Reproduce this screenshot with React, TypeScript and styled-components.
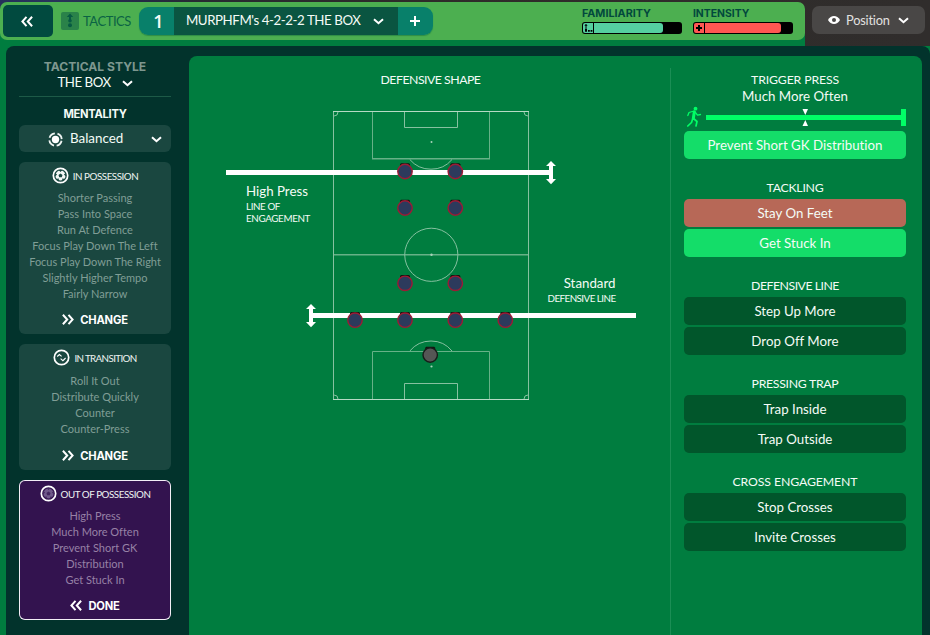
import React from "react";
import styled, { createGlobalStyle } from "styled-components";

const Global = createGlobalStyle`
  * { box-sizing: border-box; }
  body { margin: 0; background: #007d3f; overflow: hidden; }
`;

const Screen = styled.div`
  width: 930px;
  height: 635px;
  display: flex;
  flex-direction: column;
  overflow: hidden;
  background: #007d3f;
  color: #f4fbf6;
  font-family: Lato, sans-serif;
  font-variant-ligatures: none;
`;

const Text = styled.span<{ $size?: number; $ls?: number; $color?: string }>`
  display: block;
  white-space: nowrap;
  font-size: ${(p) => p.$size ?? 13.3}px;
  letter-spacing: ${(p) => p.$ls ?? 0}px;
  color: ${(p) => p.$color ?? "inherit"};
`;

const Strong = styled(Text)`
  font-family: Inter, sans-serif;
  font-weight: 700;
`;

/* ---------- header ---------- */

const Header = styled.header`
  display: flex;
  height: 46px;
  flex: none;
  background: linear-gradient(90deg, #25305a 0, #28335a 50px, #232a44 140px, #272b31 200px, #2e2b29 420px, #302d2c 100%);
`;

const HeaderMain = styled.div`
  width: 805px;
  height: 46px;
  padding-top: 2px;
  background: linear-gradient(transparent 20px, #007d3f 20px);
`;

const Bar = styled.div`
  height: 38px;
  display: flex;
  align-items: center;
  padding-left: 3px;
  border-radius: 7px;
  background: #4caf50;
`;

const BackButton = styled.button`
  width: 50px;
  height: 32px;
  padding: 0 2px 0 0;
  display: flex;
  align-items: center;
  justify-content: center;
  border: 0;
  border-radius: 5px;
  background: #014a3f;
`;

const TacticsBadge = styled.div`
  width: 18px;
  height: 18px;
  margin: 0 4px 0 8px;
  display: flex;
  border-radius: 2px;
  background: #2a8249;
`;

const TacticTabs = styled.div`
  display: flex;
  height: 28px;
  margin-left: 8px;
  border-radius: 9px;
  overflow: hidden;
  box-shadow: 0 1px 1px #2f8d45;
`;

const TabEnd = styled.div`
  width: 35px;
  display: flex;
  align-items: center;
  justify-content: center;
  background: #08806a;
`;

const TabNumber = styled(Text)`
  font-family: "Open Sans", sans-serif;
  font-weight: 600;
  padding-left: 4px;
`;

const TabName = styled.div`
  width: 224px;
  display: flex;
  align-items: center;
  padding: 0 14px 2px 12px;
  justify-content: space-between;
  background: #0a5541;
  & > svg { margin-top: 3px; }
`;

const Meter = styled.div<{ $gap: number }>`
  width: 100px;
  height: 26px;
  margin-left: ${(p) => p.$gap}px;
  display: flex;
  flex-direction: column;
  justify-content: space-between;
  line-height: 12px;
`;

const MeterTrack = styled.div`
  height: 12px;
  display: flex;
  padding: 1px;
  border-radius: 3px;
  background: #000;
`;

const MeterIcon = styled.div<{ $color: string }>`
  width: 10px;
  height: 10px;
  margin-right: 1px;
  display: flex;
  border-radius: 2px 0 0 2px;
  background: ${(p) => p.$color};
`;

const MeterFill = styled.div<{ $color: string; $width: number }>`
  width: ${(p) => p.$width}px;
  border-radius: 0 3px 3px 0;
  background: ${(p) => p.$color};
`;

const PositionButton = styled.button`
  width: 113px;
  height: 28px;
  margin: 6px 0 0 7px;
  padding: 0 16px;
  display: flex;
  align-items: center;
  border: 0;
  border-radius: 7px;
  background: #494746;
  color: #e2e1e0;
  font-family: Lato, sans-serif;
  & > span { margin: 0 auto 0 6px; }
`;

/* ---------- body ---------- */

const BodyWrap = styled.div`
  flex: 1;
  display: flex;
  padding-left: 6px;
`;

const Body = styled.div`
  width: 924px;
  display: flex;
  border-radius: 8px 8px 0 0;
  background: #02332c;
`;

const Sidebar = styled.aside`
  width: 183px;
  padding: 0 18px 0 13px;
  display: flex;
  flex-direction: column;
`;

const StyleBlock = styled.div`
  height: 51px;
  padding-top: 13px;
  display: flex;
  flex-direction: column;
  align-items: center;
  border-bottom: 1px solid #1d5a47;
  line-height: 16px;
`;

const StyleValue = styled.div`
  display: flex;
  align-items: center;
  gap: 11px;
  margin-top: -1px;
  & > svg { margin-top: 3px; }
`;

const MentalityTitle = styled.div`
  height: 28px;
  padding-top: 9px;
  display: flex;
  justify-content: center;
  line-height: 16px;
`;

const Select = styled.div`
  height: 27px;
  padding: 1px 9px 0 29px;
  display: flex;
  flex: none;
  align-items: center;
  border-radius: 6px;
  background: #1a4740;
  & > span { margin: -3px auto 0 7px; }
`;

const Card = styled.section<{ $height: number; $active?: boolean }>`
  height: ${(p) => p.$height}px;
  margin-top: 10px;
  flex: none;
  display: flex;
  flex-direction: column;
  justify-content: space-between;
  border-radius: 6px;
  background: ${(p) => (p.$active ? "#33134f" : "#1a4740")};
  color: ${(p) => (p.$active ? "#9781a6" : "#809e96")};
  box-shadow: ${(p) => (p.$active ? "inset 0 0 0 1px #f3eef6" : "none")};
`;

const CardHeader = styled.div<{ $height: number }>`
  height: ${(p) => p.$height}px;
  padding-bottom: ${(p) => p.$height - 27}px;
  display: flex;
  align-items: center;
  justify-content: center;
  gap: 4px;
  flex: none;
`;

const CardList = styled.div`
  flex: 1;
  display: flex;
  flex-direction: column;
  align-items: center;
  line-height: 16px;
`;

const CardAction = styled.div`
  height: 29px;
  display: flex;
  align-items: center;
  justify-content: center;
  gap: 6px;
  color: #fff;
`;

const Panel = styled.main`
  width: 733px;
  margin-top: 10px;
  display: flex;
  border-radius: 8px 8px 0 0;
  background: #007d3f;
`;

const Shape = styled.section`
  width: 481px;
  display: flex;
  flex-direction: column;
  align-items: center;
`;

const ShapeTitle = styled(Text)`
  height: 28px;
  margin-top: 12px;
  padding-left: 2px;
  line-height: 23px;
`;

const PitchArea = styled.div`
  position: relative;
  width: 481px;
  height: 320px;
  & > svg { display: block; }
`;

const LineLabel = styled.div<{ $x: number; $y: number; $right?: boolean }>`
  position: absolute;
  top: ${(p) => p.$y}px;
  ${(p) => (p.$right ? "right" : "left")}: ${(p) => p.$x}px;
  display: flex;
  flex-direction: column;
  align-items: ${(p) => (p.$right ? "flex-end" : "flex-start")};
  line-height: 12px;
  & > span:first-child { line-height: 18px; }
`;

const Options = styled.section`
  width: 236px;
  margin-top: 12px;
  padding-left: 13px;
  border-left: 1px solid #1b8e55;
`;

const Group = styled.div`
  width: 222px;
  margin-bottom: 16px;
  display: flex;
  flex-direction: column;
  gap: 2px;
`;

const GroupTitle = styled(Text)`
  height: 22px;
  line-height: 26px;
  text-align: center;
`;

const Choice = styled.button<{ $bg?: string }>`
  height: 28px;
  padding: 0 0 1px;
  border: 0;
  border-radius: 5px;
  background: ${(p) => p.$bg ?? "#01562b"};
  color: #f4fbf6;
  display: flex;
  align-items: center;
  justify-content: center;
  font-family: Lato, sans-serif;
  font-variant-ligatures: none;
`;

const PressHead = styled.div`
  display: flex;
  flex-direction: column;
  align-items: center;
  line-height: 17px;
  height: 38px;
  padding-top: 3px;
`;

const Slider = styled.svg`
  display: block;
  width: 222px;
  height: 23px;
  margin-bottom: 2px;
`;

/* ---------- icons ---------- */

const Chevron = ({ c = "#fff" }: { c?: string }) => (
  <svg width="11" height="7" viewBox="0 0 11 7" fill="none" stroke={c} strokeWidth="2">
    <path d="M1 1.2 5.5 5.2 10 1.2" />
  </svg>
);

const Double = ({ flip }: { flip?: boolean }) => (
  <svg width="12" height="11" viewBox="0.5 0 12 11" fill="none" stroke="#fff" strokeWidth="2">
    <path d={flip ? "M6 .8 1.9 5.5 6 10.2M11.6 .8 7.3 5.5 11.6 10.2" : "M1.4.8 5.7 5.5 1.4 10.2M7 .8 11.1 5.5 7 10.2"} />
  </svg>
);

const Ball = ({ dim }: { dim?: boolean }) => (
  <svg width="17" height="17" viewBox="0 0 17 17">
    <circle cx="8.5" cy="8.5" r="7.2" fill="none" stroke="#fff" strokeWidth="1.7" />
    <circle cx="8.5" cy="8.5" r="5.1" fill={dim ? "#70598a" : "#f4f8f6"} />
    <path
      d="M8.5 6.5 10.5 8 9.8 10.300H7.200L6.500 8zM6.600 3H10.400L8.500 4.900zM14 6V9.600L11.900 7.500zM12.600 12.200 10 13.800 10.500 11.300zM4.400 12.200 7 13.800 6.500 11.300zM3 6V9.600L5.100 7.500z"
      fill={dim ? "#43275f" : "#1a4740"}
    />
  </svg>
);

const Transition = () => (
  <svg width="17" height="17" viewBox="0 0 17 17" fill="none" stroke="#fff">
    <circle cx="8.5" cy="8.5" r="7.2" strokeWidth="1.7" />
    <path d="M4.2 7.5 6.4 5.5 8.6 7.4M7.6 9.7 9.9 11.7 12.6 9" strokeWidth="1.1" />
  </svg>
);

const Mentality = () => (
  <svg width="15" height="15" viewBox="0 0 15 15" fill="none">
    <circle cx="7.5" cy="7.5" r="3.7" fill="#fff" />
    <circle cx="7.5" cy="7.5" r="6.2" stroke="#eef4f2" strokeWidth="1.8" strokeDasharray="7 2.74" strokeDashoffset="-1.3" />
  </svg>
);

/* ---------- pitch ---------- */

const PLAYERS = [
  [405, 171.5], [455.3, 171.5], [405, 208], [455.3, 208],
  [405, 283.3], [455.3, 283.3],
  [355, 320.2], [405, 320.2], [455.3, 320.2], [505.3, 320.2],
];

const Player = ({ x, y, keeper }: { x: number; y: number; keeper?: boolean }) => (
  <g>
    <path d={`M${x - 5} ${y - 5}V${y - 7.3}L${x - 4} ${y - 8.3}H${x + 4}L${x + 5} ${y - 7.3}V${y - 5}z`} fill="#10150f" />
    <circle cx={x} cy={y} r="7.200" fill={keeper ? "#555655" : "#2c3a5c"} stroke={keeper ? "#181c1a" : "#9c1b35"} strokeWidth="1.4" />
  </g>
);

const Pitch = () => (
  <svg width="481" height="320" viewBox="189 96 481 320">
    <g fill="none" stroke="#86c1a0" strokeWidth="1">
      <path d="M333.5 111V400M528.5 111V400" />
      <path d="M333 111.5H529M333 399.5H529" stroke="#b5dac4" />
      <path d="M404.5 112V127.5H457.5V112M404.5 399V383.5H457.5V399" />
      <path d="M372.5 112V159M489.5 112V159M372.5 399V351.5H489.5V399" stroke="#67b187" />
      <path d="M372 158.8H490M334 254.8H528" stroke="#67b187" strokeWidth="1.4" />
      <circle cx="431.3" cy="254.8" r="26.6" />
      <path d="M409.8 159.5Q418 169.2 431 169.2T452 159.5M409.8 351Q418 341 431 341T452 351" />
      <path d="M338 112A4 4 0 0 1 334 116M524 112A4 4 0 0 0 528 116M338 399A4 4 0 0 0 334 395M524 399A4 4 0 0 1 528 395" />
    </g>
    <g fill="#a8d3b9">
      <circle cx="431.5" cy="142" r="1" />
      <circle cx="431.5" cy="254.8" r="1.2" />
      <circle cx="431.5" cy="366.5" r="1.1" />
    </g>
    <g fill="#fff">
      <path d="M226 170H549V175H226zM549 164H553V181H549z" />
      <path d="M551 161 556 166H546zM551 184.2 556 179H546z" />
      <path d="M313 313H636V318H313zM309 307H313V325H309z" />
      <path d="M311 304 316 309H306zM311 327.2 316 322H306z" />
    </g>
    {PLAYERS.map(([x, y]) => <Player key={`${x}-${y}`} x={x} y={y} />)}
    <Player x={430.2} y={355} keeper />
  </svg>
);

/* ---------- data ---------- */

const CARDS = [
  {
    title: "IN POSSESSION", ls: -0.46, height: 172, head: 28, icon: <Ball />,
    items: ["Shorter Passing", "Pass Into Space", "Run At Defence", "Focus Play Down The Left", "Focus Play Down The Right", "Slightly Higher Tempo", "Fairly Narrow"],
  },
  {
    title: "IN TRANSITION", ls: -0.63, height: 126, head: 29, icon: <Transition />,
    items: ["Roll It Out", "Distribute Quickly", "Counter", "Counter-Press"],
  },
  {
    title: "OUT OF POSSESSION", ls: -0.44, height: 140, head: 28, icon: <Ball dim />, active: true,
    items: ["High Press", "Much More Often", "Prevent Short GK", "Distribution", "Get Stuck In"],
  },
];

const GREEN = "#14dd69";

const GROUPS = [
  { title: "TACKLING", ls: -0.25, options: [["Stay On Feet", "#b76857"], ["Get Stuck In", GREEN]] },
  { title: "DEFENSIVE LINE", ls: -0.5, options: [["Step Up More"], ["Drop Off More"]] },
  { title: "PRESSING TRAP", ls: -0.3, options: [["Trap Inside"], ["Trap Outside"]] },
  { title: "CROSS ENGAGEMENT", ls: -0.12, options: [["Stop Crosses"], ["Invite Crosses"]] },
];

export default function App() {
  return (
    <Screen>
      <Global />
      <Header>
        <HeaderMain>
          <Bar>
            <BackButton><Double flip /></BackButton>
            <TacticsBadge>
              <svg width="18" height="18" viewBox="0 0 18 18" fill="#075a42">
                <path d="M9 1.5 12.2 5H10v4.5H8V5H5.8z" />
                <circle cx="9" cy="8.8" r="1.8" />
                <circle cx="9" cy="13.3" r="2" />
              </svg>
            </TacticsBadge>
            <Text $size={13} $ls={-0.45} $color="#0b6344">TACTICS</Text>
            <TacticTabs>
              <TabEnd><TabNumber $size={18}>1</TabNumber></TabEnd>
              <TabName>
                <Text $ls={-0.44}>MURPHFM's 4-2-2-2 THE BOX</Text>
                <Chevron />
              </TabName>
              <TabEnd>
                <svg width="10" height="10" viewBox="0 0 10 10" stroke="#fff" strokeWidth="2">
                  <path d="M5 0V10M0 5H10" />
                </svg>
              </TabEnd>
            </TacticTabs>
            <Meter $gap={149}>
              <Strong $size={10.8} $color="#02493d">FAMILIARITY</Strong>
              <MeterTrack>
                <MeterIcon $color="#55cfa0">
                  <svg width="10" height="10" viewBox="0 0 10 10">
                    <path d="M3 .8 4.6 2.8H3.5V5h-1V2.8H1.4zM2 5.5h2v3.2H2zM5 7h1.8v1.8H5zM7.6 7h1.8v1.8H7.6z" />
                  </svg>
                </MeterIcon>
                <MeterFill $color="#55cfa0" $width={69} />
              </MeterTrack>
            </Meter>
            <Meter $gap={11}>
              <Strong $size={10.4} $color="#02493d">INTENSITY</Strong>
              <MeterTrack>
                <MeterIcon $color="#ff5752">
                  <svg width="10" height="10" viewBox="0 0 10 10">
                    <path d="M4 2h2v2h2v2H6v2H4V6H2V4h2z" />
                  </svg>
                </MeterIcon>
                <MeterFill $color="#ff5752" $width={76} />
              </MeterTrack>
            </Meter>
          </Bar>
        </HeaderMain>
        <PositionButton>
          <svg width="12" height="8" viewBox="0 0 12 8">
            <path d="M0 4Q2.3 0 6 0t6 4Q9.7 8 6 8T0 4z" fill="#fff" />
            <circle cx="6" cy="4" r="2" fill="#494746" />
          </svg>
          <Text $size={12.8} $ls={-0.2}>Position</Text>
          <Chevron />
        </PositionButton>
      </Header>

      <BodyWrap>
        <Body>
          <Sidebar>
            <StyleBlock>
              <Strong $size={12.1} $color="#7d978f">TACTICAL STYLE</Strong>
              <StyleValue>
                <Text $ls={-0.5}>THE BOX</Text>
                <Chevron />
              </StyleValue>
            </StyleBlock>
            <MentalityTitle><Strong $size={11.2} $ls={-0.3}>MENTALITY</Strong></MentalityTitle>
            <Select>
              <Mentality />
              <Text $size={13.4}>Balanced</Text>
              <Chevron />
            </Select>
            {CARDS.map((card) => (
              <Card key={card.title} $height={card.height} $active={card.active}>
                <CardHeader $height={card.head}>
                  {card.icon}
                  <Text $size={9.8} $ls={card.ls} $color="#eef4f2">{card.title}</Text>
                </CardHeader>
                <CardList>
                  {card.items.map((item) => <Text key={item} $size={11}>{item}</Text>)}
                </CardList>
                <CardAction>
                  <Double flip={card.active} />
                  <Strong $size={11.2} $ls={-0.2}>{card.active ? "DONE" : "CHANGE"}</Strong>
                </CardAction>
              </Card>
            ))}
          </Sidebar>

          <Panel>
            <Shape>
              <ShapeTitle $size={12.3} $ls={-0.5}>DEFENSIVE SHAPE</ShapeTitle>
              <PitchArea>
                <Pitch />
                <LineLabel $x={57} $y={86}>
                  <Text>High Press</Text>
                  <Text $size={9.8} $ls={-0.4}>LINE OF</Text>
                  <Text $size={9.8} $ls={-0.35}>ENGAGEMENT</Text>
                </LineLabel>
                <LineLabel $x={54.5} $y={178} $right>
                  <Text>Standard</Text>
                  <Text $size={9.8} $ls={-0.54}>DEFENSIVE LINE</Text>
                </LineLabel>
              </PitchArea>
            </Shape>

            <Options>
              <PressHead>
                <Text $size={12.3} $ls={-0.15}>TRIGGER PRESS</Text>
                <Text>Much More Often</Text>
              </PressHead>
              <Slider viewBox="684 106 222 23">
                <path d="M706 115H901V109H906V126H901V120H706z" fill="#00ff66" />
                <path d="M802.5 109H808L805.3 115zM802.5 126H808L805.3 120z" fill="#fff" />
                <g fill="none" stroke="#00ff66" strokeLinecap="round" strokeLinejoin="round">
                  <path d="M694.3 112 693.3 118.5" strokeWidth="3" />
                  <path d="M693.5 118.5 697 121.5 696 126M692.8 118.5 691.5 122.5 687.8 126" strokeWidth="1.7" />
                  <path d="M694 111 689 112.5 687.8 115.5M695 112 697.5 115.2 700.5 114.5" strokeWidth="1.3" />
                </g>
                <circle cx="695.5" cy="108.7" r="1.9" fill="#00ff66" />
              </Slider>
              <Group>
                <Choice $bg={GREEN}><Text>Prevent Short GK Distribution</Text></Choice>
              </Group>
              {GROUPS.map((g) => (
                <Group key={g.title}>
                  <GroupTitle $size={12.3} $ls={g.ls}>{g.title}</GroupTitle>
                  {g.options.map(([label, bg]) => (
                    <Choice key={label} $bg={bg}><Text>{label}</Text></Choice>
                  ))}
                </Group>
              ))}
            </Options>
          </Panel>
        </Body>
      </BodyWrap>
    </Screen>
  );
}
